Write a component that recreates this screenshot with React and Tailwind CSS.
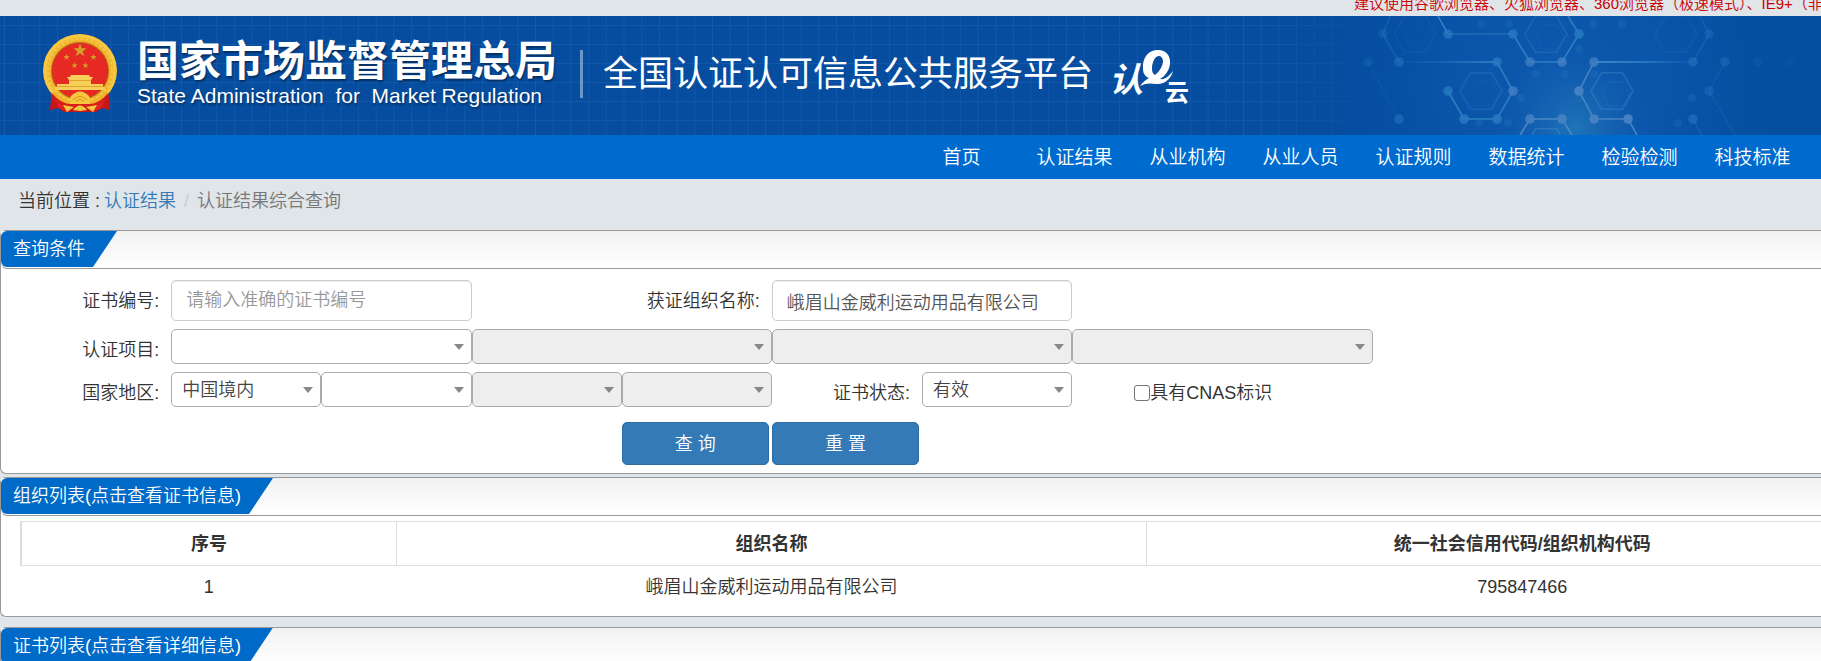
import { useState } from "react";

const NAV_ITEMS = [
  "首页",
  "认证结果",
  "从业机构",
  "从业人员",
  "认证规则",
  "数据统计",
  "检验检测",
  "科技标准",
];

const COMPANY = "峨眉山金威利运动用品有限公司";

const ORGS = [{ id: 1, name: COMPANY, code: "795847466" }];

// Molecule network on the right of the banner: [x, y, opacity]
const NODES = [
  [183, 18, 0.3],
  [199, 46, 0.5],
  [168, 46, 0.25],
  [248, 18, 0.75],
  [313, 18, 0.8],
  [379, 18, 0.85],
  [297, 46, 0.8],
  [493, 46, 0.5],
  [248, 75, 0.8],
  [264, 103, 0.9],
  [297, 103, 0.9],
  [199, 103, 0.5],
  [493, 103, 0.5],
  [509, 75, 0.4],
  [509, 18, 0.35],
  [525, 46, 0.4],
  [558, 46, 0.15],
  [590, 46, 0.1],
];

// Nodes close to the glow
const BRIGHT_NODES = [
  [330, 46, 0.7],
  [362, 46, 0.8],
  [394, 46, 0.8],
  [313, 75, 0.8],
  [379, 75, 1],
  [330, 103, 0.9],
  [362, 103, 1],
  [394, 103, 1],
  [428, 103, 1],
];

const FAINT_NODES = [
  [309, 8],
  [281, 8],
  [393, 8],
  [422, 8],
  [336, 58],
  [365, 58],
  [394, 58],
  [379, 33],
  [321, 82],
  [379, 82],
  [279, 107],
  [308, 107],
  [478, 107],
  [492, 82],
];

const HEXAGONS = [
  [281, 75, 0.25],
  [346, 18, 0.25],
  [412, 75, 0.35],
  [476, 18, 0.12],
  [215, 18, 0.1],
  [346, 131, 0.4],
];

const star = (cx, cy, r) =>
  Array.from({ length: 10 }, (_, i) => {
    const a = (Math.PI / 5) * i - Math.PI / 2;
    const d = i % 2 ? r * 0.4 : r;
    return `${cx + d * Math.cos(a)},${cy + d * Math.sin(a)}`;
  }).join(" ");

const hexagon = (cx, cy, r) =>
  Array.from({ length: 6 }, (_, i) => {
    const a = (Math.PI / 3) * i;
    return `${cx + r * Math.cos(a)},${cy + r * Math.sin(a)}`;
  }).join(" ");

const BannerGrid = () => (
  <svg className="absolute inset-0 w-full h-full" aria-hidden="true">
    <defs>
      <pattern id="grid" x="4" y="9" width="17.7" height="19" patternUnits="userSpaceOnUse">
        <path d="M0.5 0V19M0 0.5H17.7" stroke="#1f66b4" strokeWidth="1" fill="none" opacity="0.45" />
      </pattern>
      <linearGradient id="gridFade" x1="0" x2="1">
        <stop offset="0" stopColor="#fff" />
        <stop offset="0.9" stopColor="#fff" />
        <stop offset="1" stopColor="#000" />
      </linearGradient>
      <mask id="gridMask">
        <rect width="77%" height="100%" fill="url(#gridFade)" />
      </mask>
    </defs>
    <rect width="77%" height="100%" fill="url(#grid)" mask="url(#gridMask)" />
  </svg>
);

const BannerNetwork = () => (
  <svg className="absolute right-0 top-0 h-full" viewBox="0 0 621 119" aria-hidden="true">
    <defs>
      <radialGradient id="haze" cx="360" cy="70" r="230" gradientUnits="userSpaceOnUse">
        <stop offset="0" stopColor="#0e5aaf" />
        <stop offset="0.5" stopColor="#0b55ab" stopOpacity="0.8" />
        <stop offset="1" stopColor="#074fa2" stopOpacity="0" />
      </radialGradient>
      <radialGradient id="glow" cx="375" cy="112" r="80" gradientUnits="userSpaceOnUse">
        <stop offset="0" stopColor="#1f74b8" />
        <stop offset="0.5" stopColor="#1766b3" stopOpacity="0.6" />
        <stop offset="1" stopColor="#0f5bb0" stopOpacity="0" />
      </radialGradient>
      <linearGradient id="fadeRight" gradientUnits="userSpaceOnUse" x1="394" x2="493" y1="0" y2="0">
        <stop offset="0" stopColor="#3a86c6" />
        <stop offset="0.5" stopColor="#2478bf" />
        <stop offset="1" stopColor="#1a66b6" stopOpacity="0.3" />
      </linearGradient>
      <linearGradient id="fadeLeft" gradientUnits="userSpaceOnUse" x1="199" x2="297" y1="0" y2="0">
        <stop offset="0" stopColor="#1a66b6" stopOpacity="0.2" />
        <stop offset="1" stopColor="#2a7dc2" />
      </linearGradient>
    </defs>
    <rect width="621" height="119" fill="url(#haze)" />
    <rect width="621" height="119" fill="url(#glow)" />
    {HEXAGONS.map(([x, y, o]) => (
      <g key={`${x}-${y}`} fill="none" stroke="#4a90cf" opacity={o}>
        <polygon points={hexagon(x, y, 21)} strokeWidth="1.5" />
        <polygon points={hexagon(x + 4, y + 3, 14)} strokeWidth="1" opacity="0.5" />
      </g>
    ))}
    {FAINT_NODES.map(([x, y]) => (
      <circle key={`${x}-${y}`} cx={x} cy={y} r="4" fill="#2577bd" opacity="0.3" />
    ))}
    <g fill="none" stroke="#2d80c0" strokeWidth="1.6">
      <path d="M238 0L248 18M313 18L330 46H362L379 18L368 0" />
      <path d="M248 18H313" opacity="0.6" />
      <path d="M297 46L313 75L297 103H264L248 75" />
      <path d="M394 46L379 75L394 103H428L437 119" stroke="#4585c4" />
      <path d="M320 119L330 103H362L372 119" stroke="#4a8ac4" />
      <path d="M190 0L183 18L199 46" opacity="0.35" />
      <path d="M168 46L199 103" opacity="0.12" />
      <path d="M500 0L509 18L493 46M493 103L502 119" opacity="0.3" />
      <path d="M525 46L509 75L535 119" opacity="0.2" />
    </g>
    <rect x="199" y="45" width="98" height="2" fill="url(#fadeLeft)" />
    <rect x="394" y="45" width="99" height="2" fill="url(#fadeRight)" />
    {NODES.map(([x, y, o]) => (
      <circle key={`${x}-${y}`} cx={x} cy={y} r="4.8" fill="#2779c2" opacity={o} />
    ))}
    {BRIGHT_NODES.map(([x, y, o]) => (
      <circle key={`${x}-${y}`} cx={x} cy={y} r="4.8" fill="#4480c2" opacity={o} />
    ))}
  </svg>
);

const Emblem = () => (
  <svg className="w-[74px] h-20 shrink-0" viewBox="13 11 74 80" role="img" aria-label="国徽">
    <path d="M22 66L20 87L28 85L34 89H66L72 85L80 87L78 66Z" fill="#c8161d" />
    <path d="M24 70L28 84L37 89L35 76ZM76 70L72 84L63 89L65 76Z" fill="#e3231f" />
    <ellipse cx="50" cy="47.5" rx="37" ry="36.5" fill="#efb42a" />
    <ellipse cx="50" cy="47.5" rx="35" ry="34.5" fill="none" stroke="#f6c846" strokeWidth="3" />
    <ellipse cx="50" cy="47.5" rx="32" ry="31.5" fill="none" stroke="#fad65c" strokeWidth="2" strokeDasharray="3 2" opacity="0.6" />
    <ellipse cx="50" cy="48" rx="29" ry="29" fill="#b5651a" />
    <ellipse cx="50" cy="48" rx="28" ry="28" fill="#e62a23" />
    <g fill="#d3a02c">
      <polygon points={star(50, 27.5, 7)} />
      <polygon points={star(36.5, 34, 3.3)} />
      <polygon points={star(63.5, 34, 3.3)} />
      <polygon points={star(44.5, 42.5, 3.3)} />
      <polygon points={star(55.5, 42.5, 3.3)} />
    </g>
    <path d="M41 52H59L60 54H63L61 57V61H73V64H75V67H25V64H27V61H39V57L37 54H40Z" fill="#f8cf5a" />
    <path d="M39 57.5H61M26 63.5H74" stroke="#d99a20" strokeWidth="0.8" />
    <path d="M22 70Q34 76 40 81H60Q66 76 78 70L74 80L60 85H40L26 80Z" fill="#d81e1d" />
    <path d="M24 68Q33 77 41 79L38 81Q28 78 23 71ZM76 68Q67 77 59 79L62 81Q72 78 77 71Z" fill="#efb42a" />
    <path d="M41 73Q50 64 59 73L61 77L57 81H43L39 77Z" fill="#f6c63e" />
    <path d="M43 77Q50 70 57 77M46 79Q50 74 54 79" fill="none" stroke="#d48f1c" strokeWidth="1" />
    <path d="M33 82L44 84L37 89ZM67 82L56 84L63 89ZM43 87Q50 78 57 87L50 88Z" fill="#f6c63e" />
  </svg>
);

const CloudLogo = () => (
  <svg className="w-20 h-[60px] shrink-0" viewBox="0 0 80 60" fill="#fff" role="img" aria-label="认e云">
    <g fontFamily="'Noto Sans CJK SC', sans-serif" fontWeight="700">
      <text x="-4" y="44" fontSize="34" fontStyle="italic">
        认
      </text>
      <text x="52" y="53" fontSize="24">
        云
      </text>
    </g>
    <path
      fillRule="evenodd"
      d="M30 21C29 9 36 2 45 2C53 2 58 8 57 16C56 23 52 28 47 31C52 32 56 28 60 23C58 31 51 37 43 36C37 35 33 35 27 38C31 33 34 31 36 30C33 29 30 26 30 21ZM39 21C39 24 40 26 42 27C46 24 50 18 50 13C50 10 48 8 46 8C42 8 39 14 39 21Z"
    />
  </svg>
);

const Panel = ({ title, children }) => (
  <section className="bg-white border border-r-0 border-[#999] rounded-l-md">
    <div className="h-[38px] border-b border-[#999] rounded-bl-md bg-linear-to-b from-[#f2f2f2] to-white overflow-hidden">
      <h2 className="inline-block h-9 pl-3 pr-8 leading-9 text-white bg-[#006ac8] rounded-l-md [clip-path:polygon(0_0,100%_0,calc(100%-24px)_100%,0_100%)]">
        {title}
      </h2>
    </div>
    {children}
  </section>
);

const SelectBox = ({ options = [""], className = "", ...rest }) => (
  <div className={`relative ${className}`}>
    <select
      className="block w-full h-[35px] pl-[10px] pr-7 appearance-none border border-[#aaa] rounded-[5px] bg-white text-[#444] disabled:bg-[#eee] disabled:opacity-100"
      {...rest}
    >
      {options.map((option) => (
        <option key={option}>{option}</option>
      ))}
    </select>
    <svg
      className="absolute right-2 top-[15px] w-[10px] h-[6px] pointer-events-none"
      viewBox="0 0 10 6"
      fill="#888"
      aria-hidden="true"
    >
      <path d="M0 0H10L5 6Z" />
    </svg>
  </div>
);

const INPUT_CLASS =
  "col-span-2 h-[41px] w-full px-[14px] border border-[#ccc] rounded-[5px] bg-white text-[#555] placeholder:text-[#999] shadow-[inset_0_1px_1px_rgba(0,0,0,0.08)]";

const BUTTON_CLASS =
  "h-[43px] mr-[3px] border border-[#2e6da4] rounded-[5px] bg-[#337ab7] text-white";

const SearchForm = () => {
  const [certNo, setCertNo] = useState("");
  const [orgName, setOrgName] = useState(COMPANY);
  const [hasCnas, setHasCnas] = useState(false);

  const handleReset = () => {
    setCertNo("");
    setOrgName("");
    setHasCnas(false);
  };

  return (
    <form className="pt-[11px] pb-2 pl-5 -mr-0.5" onSubmit={(e) => e.preventDefault()}>
      <div className="grid grid-cols-12 items-center">
        <label htmlFor="certNo" className="text-right pr-3">
          证书编号:
        </label>
        <input
          id="certNo"
          type="text"
          className={INPUT_CLASS}
          placeholder="请输入准确的证书编号"
          value={certNo}
          onChange={(e) => setCertNo(e.target.value)}
        />
        <label htmlFor="orgName" className="col-start-5 text-right pr-3">
          获证组织名称:
        </label>
        <input
          id="orgName"
          type="text"
          className={INPUT_CLASS}
          value={orgName}
          onChange={(e) => setOrgName(e.target.value)}
        />
      </div>

      <div className="grid grid-cols-12 items-center mt-2">
        <label htmlFor="project" className="text-right pr-3 pt-1.5">
          认证项目:
        </label>
        <SelectBox id="project" className="col-span-2" />
        <SelectBox aria-label="认证项目二级" className="col-span-2" disabled />
        <SelectBox aria-label="认证项目三级" className="col-span-2" disabled />
        <SelectBox aria-label="认证项目四级" className="col-span-2" disabled />
      </div>

      <div className="grid grid-cols-12 items-center mt-2">
        <label htmlFor="region" className="text-right pr-3 pt-1.5">
          国家地区:
        </label>
        <SelectBox id="region" options={["中国境内", "中国境外"]} />
        <SelectBox aria-label="省" />
        <SelectBox aria-label="市" disabled />
        <SelectBox aria-label="区县" disabled />
        <label htmlFor="status" className="text-right pr-3 pt-1.5">
          证书状态:
        </label>
        <SelectBox id="status" options={["有效", "暂停", "撤销", "注销"]} />
        <label className="col-span-3 flex items-center pl-[62px] pt-1.5">
          <input
            type="checkbox"
            className="w-4 h-4 appearance-none border border-[#767676] rounded-[3px] bg-white checked:bg-[#337ab7]"
            checked={hasCnas}
            onChange={(e) => setHasCnas(e.target.checked)}
          />
          具有CNAS标识
        </label>
      </div>

      <div className="grid grid-cols-12 mt-[15px]">
        <button type="submit" className={`col-start-5 ${BUTTON_CLASS}`}>
          查 询
        </button>
        <button type="button" className={BUTTON_CLASS} onClick={handleReset}>
          重 置
        </button>
      </div>
    </form>
  );
};

// The table is wider than the window and runs off its right side
const OrgTable = () => (
  <table className="w-[calc(100%+58px)] mt-[5px] ml-[19px] mb-2 table-fixed border-collapse text-center">
    <thead>
      <tr className="h-11 border border-[#ddd] border-l-2">
        <th className="w-1/5 border-r border-[#ddd]">序号</th>
        <th className="w-2/5 border-r border-[#ddd]">组织名称</th>
        <th className="w-2/5">统一社会信用代码/组织机构代码</th>
      </tr>
    </thead>
    <tbody>
      {ORGS.map((org) => (
        <tr key={org.id} className="h-[42px]">
          <td>{org.id}</td>
          <td>{org.name}</td>
          <td>{org.code}</td>
        </tr>
      ))}
    </tbody>
  </table>
);

const App = () => (
  <div className="h-screen overflow-hidden bg-[#e0e5e9] text-[#333] text-[18px] leading-6 font-[350] font-['Liberation_Sans','Noto_Sans_CJK_SC',sans-serif]">
    {/* Browser notice, scrolled partly out of view */}
    <div className="h-4 flex items-end justify-end overflow-hidden">
      <p className="w-[467px] shrink-0 whitespace-nowrap text-[15px] leading-6 text-[#c00]">
        建议使用谷歌浏览器、火狐浏览器、360浏览器（极速模式）、IE9+（非兼容模式）
      </p>
    </div>

    <header className="relative h-[119px] overflow-hidden bg-linear-to-r from-[#064da0] via-[#064da0] via-70% to-[#064f9f]">
      <BannerGrid />
      <BannerNetwork />
      <div className="relative h-full flex items-center pl-[43px] pb-1 text-white whitespace-nowrap">
        <Emblem />
        <div className="ml-5 [text-shadow:1px_2px_2px_rgba(0,0,0,0.4)]">
          <h1 className="text-[42px] leading-[44px] font-bold">国家市场监督管理总局</h1>
          <p className="text-[21px] leading-6 whitespace-pre">
            State Administration  for  Market Regulation
          </p>
        </div>
        <div className="w-[3px] h-12 ml-[23px] bg-[#6c96c8]" />
        <p className="ml-5 text-[35px] leading-[44px] font-normal">全国认证认可信息公共服务平台</p>
        <div className="ml-5 pt-2">
          <CloudLogo />
        </div>
      </div>
    </header>

    <nav className="h-11 flex items-center justify-end pt-0.5 pr-3 bg-[#006bcf] text-white text-[19px]">
      {NAV_ITEMS.map((item) => (
        <a key={item} href="#" className="w-[113px] text-center">
          {item}
        </a>
      ))}
    </nav>

    <div className="h-[51px] flex items-center pl-[18px] pb-2">
      <span>当前位置 :</span>
      <a href="#" className="ml-1 text-[#337ab7]">
        认证结果
      </a>
      <span className="mx-2 text-[#ccc]">/</span>
      <span className="text-[#777]">认证结果综合查询</span>
    </div>

    <main>
      <Panel title="查询条件">
        <SearchForm />
      </Panel>
      <div className="mt-[3px]">
        <Panel title="组织列表(点击查看证书信息)">
          <OrgTable />
        </Panel>
      </div>
      <div className="mt-[10px]">
        <Panel title="证书列表(点击查看详细信息)" />
      </div>
    </main>
  </div>
);

export default App;
